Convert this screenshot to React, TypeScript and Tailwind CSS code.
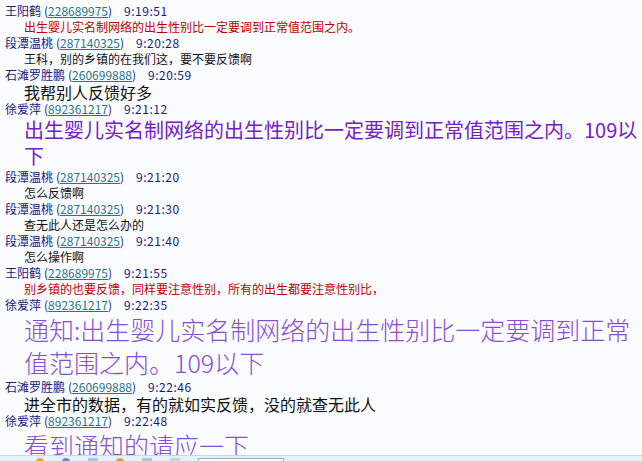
import React from 'react'

type Msg = {
  name: string
  qq: string
  time: string
  lines: string[]
  kind: 'red' | 'plain' | 'plain16' | 'purple' | 'serif'
}

const messages: Msg[] = [
  { name: '王阳鹤', qq: '228689975', time: '9:19:51', kind: 'red', lines: ['出生婴儿实名制网络的出生性别比一定要调到正常值范围之内。'] },
  { name: '段潭温桃', qq: '287140325', time: '9:20:28', kind: 'plain', lines: ['王科，别的乡镇的在我们这，要不要反馈啊'] },
  { name: '石滩罗胜鹏', qq: '260699888', time: '9:20:59', kind: 'plain16', lines: ['我帮别人反馈好多'] },
  { name: '徐爱萍', qq: '892361217', time: '9:21:12', kind: 'purple', lines: ['出生婴儿实名制网络的出生性别比一定要调到正常值范围之内。109以', '下'] },
  { name: '段潭温桃', qq: '287140325', time: '9:21:20', kind: 'plain', lines: ['怎么反馈啊'] },
  { name: '段潭温桃', qq: '287140325', time: '9:21:30', kind: 'plain', lines: ['查无此人还是怎么办的'] },
  { name: '段潭温桃', qq: '287140325', time: '9:21:40', kind: 'plain', lines: ['怎么操作啊'] },
  { name: '王阳鹤', qq: '228689975', time: '9:21:55', kind: 'red', lines: ['别乡镇的也要反馈，同样要注意性别，所有的出生都要注意性别比，'] },
  { name: '徐爱萍', qq: '892361217', time: '9:22:35', kind: 'serif', lines: ['通知:出生婴儿实名制网络的出生性别比一定要调到正常', '值范围之内。109以下'] },
  { name: '石滩罗胜鹏', qq: '260699888', time: '9:22:46', kind: 'plain16', lines: ['进全市的数据，有的就如实反馈，没的就查无此人'] },
  { name: '徐爱萍', qq: '892361217', time: '9:22:48', kind: 'serif', lines: ['看到通知的请应一下'] },
]

const bodyClass: Record<Msg['kind'], string> = {
  red: 'text-[12px] leading-[16px] text-[#c00000]',
  plain: 'text-[12px] leading-[16px] text-[#111]',
  plain16: 'text-[16px] leading-[18px] text-[#111]',
  purple: 'text-[20px] leading-[26px] text-[#7420c8]',
  serif: 'text-[25px] leading-[33px] text-[#8a4cd4] font-light',
}

const Header = ({ m }: { m: Msg }) => (
  <div className="flex items-center h-[16px] text-[12px] leading-[16px] pl-[5px] text-[#14207a]">
    <span>{m.name}</span>
    <span className="ml-[3px]">(</span>
    <span className="text-[#2a7688] underline">{m.qq}</span>
    <span>)</span>
    <span className="ml-[12px] tracking-[0.5px]">{m.time}</span>
  </div>
)

export default function App() {
  return (
    <div
      className="w-[642px] h-[461px] flex flex-col bg-[#fafcfe] overflow-hidden"
      style={{ fontFamily: '"Noto Sans CJK SC", "Noto Sans", sans-serif' }}
    >
      <div className="flex-1 overflow-hidden pt-[3px]">
        {messages.map((m, i) => (
          <div key={i}>
            <Header m={m} />
            <div className={`pl-[24px] whitespace-nowrap ${bodyClass[m.kind]}`}>
              {m.lines.map((l, j) => (
                <div key={j}>{l}</div>
              ))}
            </div>
          </div>
        ))}
      </div>
      <div className="h-[6px] shrink-0 border-t border-[#c5d9e3] bg-[#e6f2fa] flex items-start gap-[18px] pl-[36px] pt-[2px]">
        <span className="w-[8px] h-[4px] rounded-t-full bg-[#f0a030]" />
        <span className="w-[8px] h-[4px] rounded-t-full bg-[#6a8ab8]" />
        <span className="w-[10px] h-[4px] bg-[#b0c4d8]" />
        <span className="w-[8px] h-[4px] rounded-t-full bg-[#e89a40]" />
        <span className="w-[10px] h-[4px] bg-[#b0c4d8]" />
        <span className="w-[10px] h-[4px] bg-[#c0d0e0]" />
        <span className="w-[86px] h-[4px] bg-white border border-[#8fb0c8] border-b-0" />
      </div>
    </div>
  )
}
